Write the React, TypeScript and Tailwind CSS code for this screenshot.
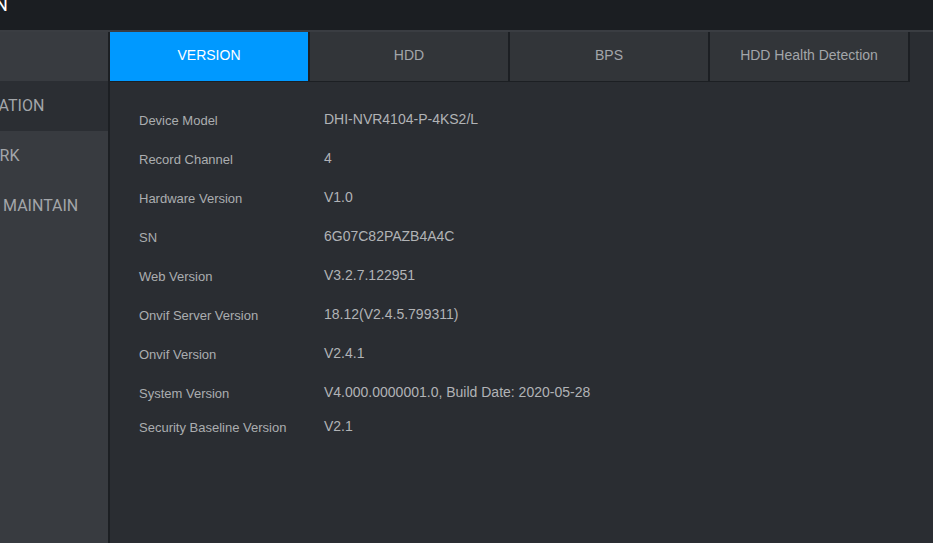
import React from 'react';

// Device info rows
const rows: { label: string; value: string }[] = [
  { label: 'Device Model', value: 'DHI-NVR4104-P-4KS2/L' },
  { label: 'Record Channel', value: '4' },
  { label: 'Hardware Version', value: 'V1.0' },
  { label: 'SN', value: '6G07C82PAZB4A4C' },
  { label: 'Web Version', value: 'V3.2.7.122951' },
  { label: 'Onvif Server Version', value: '18.12(V2.4.5.799311)' },
  { label: 'Onvif Version', value: 'V2.4.1' },
  { label: 'System Version', value: 'V4.000.0000001.0, Build Date: 2020-05-28' },
  { label: 'Security Baseline Version', value: 'V2.1' },
];

const tabs = ['VERSION', 'HDD', 'BPS', 'HDD Health Detection'];

const App: React.FC = () => {
  return (
    <div className="w-[933px] h-[543px] overflow-hidden flex flex-col bg-[#2a2d32] font-['Liberation_Sans',Arial,sans-serif]">
      {/* Top bar */}
      <div className="h-[32px] shrink-0 bg-[#1b1e22] border-b-2 border-[#3a3d42] overflow-hidden">
        <span className="block -mt-[6px] -ml-[10px] text-[18px] leading-[22px] font-['Roboto',sans-serif] text-white whitespace-nowrap">
          <span className="text-[#e0334a]">I</span>N
        </span>
      </div>

      <div className="flex flex-1 min-h-0">
        {/* Sidebar */}
        <div className="w-[110px] shrink-0 bg-[#383b40] border-r-2 border-[#1c1f23] overflow-hidden font-['Roboto',sans-serif] text-[16px] text-[#a3a6aa]">
          <div className="h-[49px]" />
          <div className="h-[50px] bg-[#2b2e33] flex items-center whitespace-nowrap">
            <span className="-ml-[61px]">INFORMATION</span>
          </div>
          <div className="h-[50px] flex items-center whitespace-nowrap">
            <span className="-ml-[56px]">NETWORK</span>
          </div>
          <div className="h-[50px] flex items-center whitespace-nowrap">
            <span className="-ml-[62px]">SYSTEM MAINTAIN</span>
          </div>
        </div>

        {/* Main */}
        <div className="flex-1 flex flex-col">
          <div className="flex h-[50px] shrink-0">
            {tabs.map((t, i) => (
              <div
                key={t}
                className={`w-[200px] h-[50px] pb-[2px] flex items-center justify-center text-[14px] border-b border-r-2 border-[#1c1f23] ${
                  i === 0 ? 'bg-[#0099ff] text-white' : 'bg-[#323539] text-[#a3a6aa]'
                }`}
              >
                {t}
              </div>
            ))}
          </div>

          <div className="pt-[19px] pl-[29px]">
            {rows.map((r, i) => (
              <div key={r.label} className={`flex items-center ${i === rows.length - 1 ? 'h-[29px]' : 'h-[39px]'}`}>
                <div className="w-[185px] text-[13px] text-[#abadb0] shrink-0">{r.label}</div>
                <div className="text-[14px] text-[#b1b3b6] -mt-[2px]">{r.value}</div>
              </div>
            ))}
          </div>
        </div>
      </div>
    </div>
  );
};

export default App;
